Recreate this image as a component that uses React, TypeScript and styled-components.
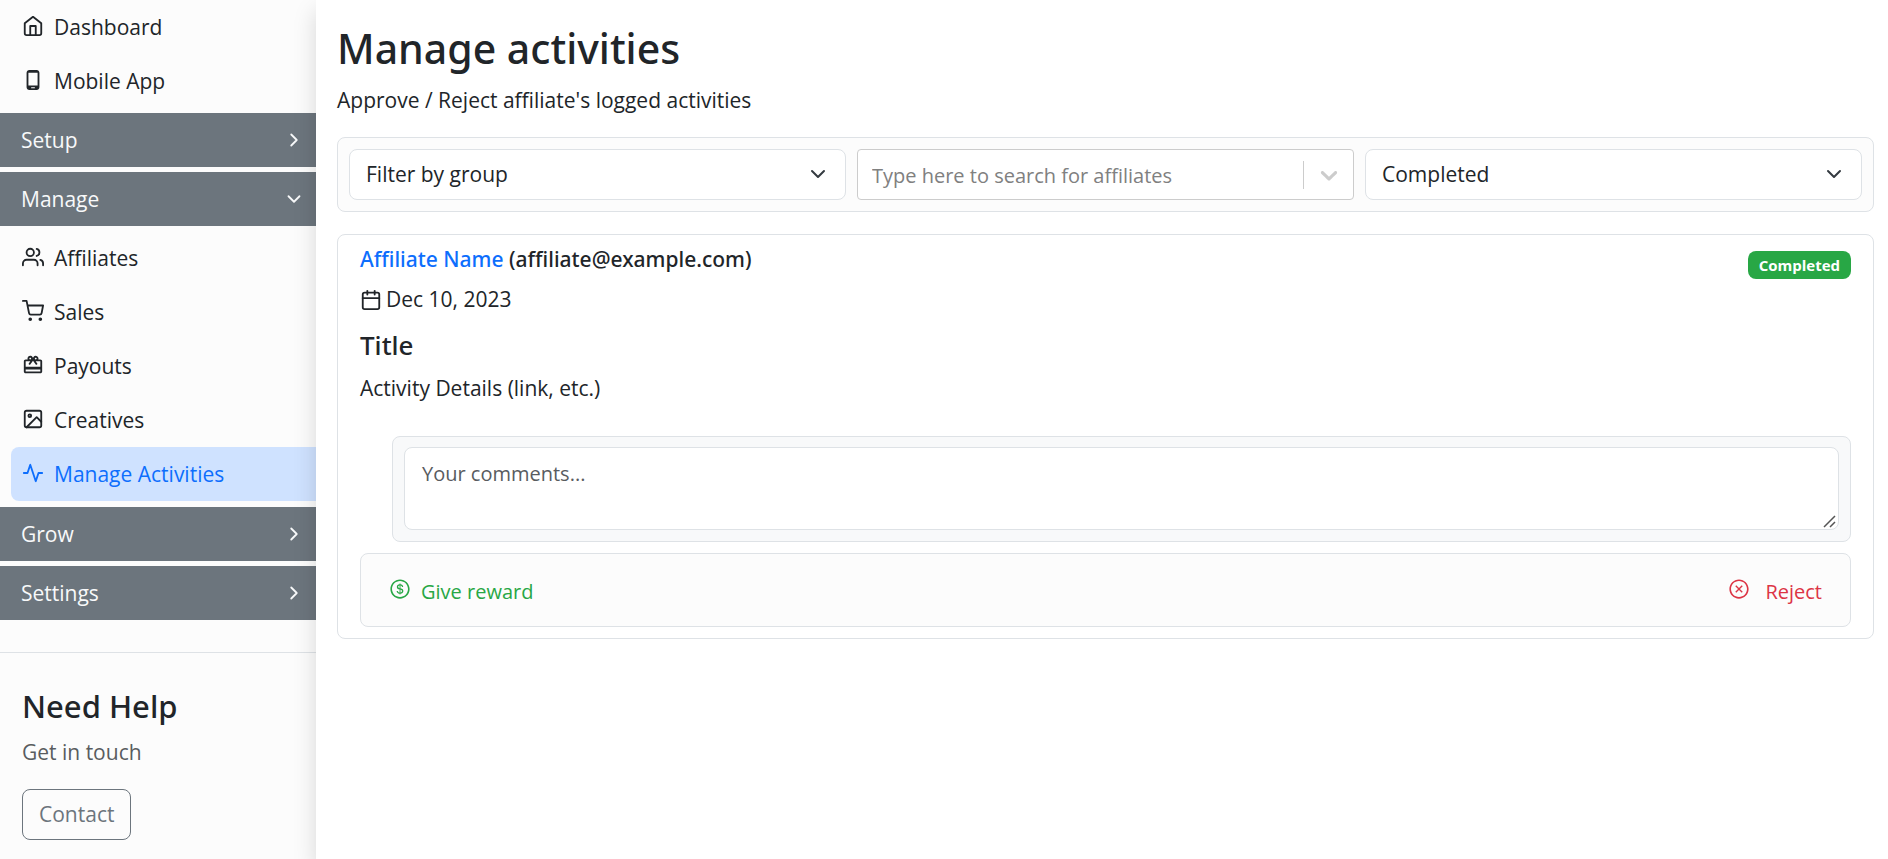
import React from "react";
import styled, { createGlobalStyle } from "styled-components";
import type { IconType } from "react-icons";
import {
  FiActivity,
  FiCalendar,
  FiChevronDown,
  FiChevronRight,
  FiHome,
  FiImage,
  FiShoppingCart,
  FiUsers,
} from "react-icons/fi";
import { MdOutlinePhoneAndroid, MdRedeem } from "react-icons/md";
import { AiOutlineCloseCircle, AiOutlineDollarCircle } from "react-icons/ai";

const bodyFont = '"Segoe UI", "Open Sans", "Noto Sans", sans-serif';
const headingFont = '"Segoe UI", "Noto Sans", sans-serif';

const color = {
  text: "#212529",
  muted: "#595c5f",
  gray: "#6c757d",
  border: "#dee2e6",
  panel: "#fcfcfc",
  blue: "#0d6efd",
  green: "#28a745",
  red: "#dc3545",
};

const GlobalStyle = createGlobalStyle`
  *, *::before, *::after { box-sizing: border-box; }
  body {
    margin: 0;
    background: #fff;
    color: ${color.text};
    font-family: ${bodyFont};
    font-size: 21px;
    line-height: 33px;
  }
  h1, h2, h3, p { margin: 0; }
  a { text-decoration: none; }
  button, input, select, textarea { font: inherit; }
`;

const Page = styled.div`
  display: flex;
  min-height: 100vh;
`;

const Sidebar = styled.aside`
  flex: 0 0 316px;
  background: ${color.panel};
`;

const Nav = styled.nav`
  display: flex;
  flex-direction: column;
  gap: 5px;
  padding-bottom: 32px;
  border-bottom: 1px solid ${color.border};
`;

const NavList = styled.ul`
  list-style: none;
  margin: 0;
  padding: 0 0 0 11px;

  button + & {
    padding-bottom: 1px;
  }
`;

const NavLink = styled.a<{ $active?: boolean }>`
  display: flex;
  align-items: center;
  gap: 10px;
  height: 54px;
  padding-left: 11px;
  border-radius: 8px 0 0 8px;
  color: ${(p) => (p.$active ? color.blue : color.text)};
  background: ${(p) => (p.$active ? "#cfe2ff" : "transparent")};

  svg {
    flex: none;
    margin-bottom: 2px;
  }
`;

const GroupButton = styled.button`
  display: flex;
  align-items: center;
  justify-content: space-between;
  width: 100%;
  height: 54px;
  padding: 0 11px 0 21px;
  border: 0;
  background: ${color.gray};
  color: #f8f9fa;
  text-align: left;
  cursor: pointer;
`;

const Help = styled.section`
  display: flex;
  flex-direction: column;
  align-items: flex-start;
  padding: 35px 22px 19px;
`;

const HelpTitle = styled.h2`
  margin-bottom: 11px;
  font: 500 31px/37px ${headingFont};
`;

const HelpText = styled.p`
  margin-bottom: 20px;
  color: ${color.muted};
`;

const ContactButton = styled.button`
  height: 51px;
  padding: 0 16px;
  border: 1px solid ${color.gray};
  border-radius: 8px;
  background: transparent;
  color: ${color.gray};
  cursor: pointer;
`;

const Main = styled.main`
  position: relative;
  flex: 1;
  min-width: 0;
  padding: 22px 14px 22px 21px;
  background: #fff;
  box-shadow: 0 11px 22px rgba(0, 0, 0, 0.15);
`;

const PageTitle = styled.h1`
  margin-bottom: 10px;
  font: 500 41px/52px ${headingFont};
`;

const Filters = styled.form`
  display: grid;
  grid-template-columns: repeat(3, minmax(0, 1fr));
  gap: 11px;
  margin: 20px 0 22px;
  padding: 11px;
  border: 1px solid ${color.border};
  border-radius: 8px;
  background: ${color.panel};
`;

const SelectField = styled.div`
  position: relative;

  svg {
    position: absolute;
    top: 17px;
    right: 20px;
    pointer-events: none;
  }
`;

const Select = styled.select`
  display: block;
  width: 100%;
  height: 51px;
  padding: 0 50px 0 16px;
  border: 1px solid ${color.border};
  border-radius: 8px;
  background: #fff;
  color: ${color.text};
  appearance: none;
`;

const SearchField = styled.div`
  display: flex;
  align-items: center;
  height: 51px;
  border: 1px solid #ccc;
  border-radius: 4px;
  background: #fff;
`;

const SearchInput = styled.input`
  flex: 1;
  min-width: 0;
  height: 100%;
  padding: 2px 14px 0;
  border: 0;
  outline: 0;
  background: transparent;
  font-size: 20px;

  &::placeholder {
    color: #808080;
    opacity: 1;
  }
`;

const SearchToggle = styled.button`
  display: flex;
  align-items: center;
  justify-content: center;
  width: 50px;
  height: 28px;
  padding: 0;
  border: 0;
  border-left: 1px solid #ccc;
  background: transparent;
  color: #ccc;
`;

const Card = styled.article`
  padding: 8px 22px 11px;
  border: 1px solid ${color.border};
  border-radius: 8px;
`;

const CardHeader = styled.header`
  display: flex;
  justify-content: space-between;
  align-items: flex-start;
`;

const Affiliate = styled.p`
  margin-bottom: 7px;
  font-family: ${headingFont};
  font-weight: 500;

  a {
    color: ${color.blue};
  }
`;

const DateLine = styled.p`
  display: flex;
  align-items: center;
  gap: 4px;
`;

const Badge = styled.span`
  margin-top: 8px;
  padding: 0 11px;
  border-radius: 8px;
  background: ${color.green};
  color: #fff;
  font-size: 15px;
  font-weight: 700;
  line-height: 28px;
`;

const ActivityTitle = styled.h3`
  margin: 13px 0 11px;
  font: 500 26px/32px ${headingFont};
`;

const CommentBox = styled.div`
  position: relative;
  margin: 31px 0 11px 32px;
  padding: 10px 11px 11px;
  border: 1px solid ${color.border};
  border-radius: 8px;
  background: #f8f9fa;
`;

const CommentInput = styled.textarea`
  display: block;
  width: 100%;
  height: 83px;
  padding: 9px 17px;
  border: 1px solid ${color.border};
  border-radius: 8px;
  background: #fff;
  font-size: 20px;
  resize: none;

  &::placeholder {
    color: ${color.muted};
    opacity: 1;
  }
`;

const ResizeGrip = styled.svg`
  position: absolute;
  right: 14px;
  bottom: 13px;
  pointer-events: none;
`;

const Actions = styled.footer`
  display: flex;
  justify-content: space-between;
  padding: 11px;
  border: 1px solid ${color.border};
  border-radius: 8px;
  background: ${color.panel};
`;

const ActionButton = styled.button<{ $color: string; $gap: number }>`
  display: flex;
  align-items: center;
  gap: ${(p) => p.$gap}px;
  height: 50px;
  padding: 2px 17px 0;
  border: 0;
  background: transparent;
  color: ${(p) => p.$color};
  font-size: 20px;
  cursor: pointer;

  svg {
    margin-bottom: 4px;
  }
`;

type Item = { label: string; icon: IconType; active?: boolean };

const topItems: Item[] = [
  { label: "Dashboard", icon: FiHome },
  { label: "Mobile App", icon: MdOutlinePhoneAndroid },
];

const manageItems: Item[] = [
  { label: "Affiliates", icon: FiUsers },
  { label: "Sales", icon: FiShoppingCart },
  { label: "Payouts", icon: MdRedeem },
  { label: "Creatives", icon: FiImage },
  { label: "Manage Activities", icon: FiActivity, active: true },
];

function NavItems({ items }: { items: Item[] }) {
  return (
    <NavList>
      {items.map(({ label, icon: Icon, active }) => (
        <li key={label}>
          <NavLink href="#" $active={active} aria-current={active ? "page" : undefined}>
            <Icon size={22} />
            {label}
          </NavLink>
        </li>
      ))}
    </NavList>
  );
}

function NavGroup({ label, open = false }: { label: string; open?: boolean }) {
  const Chevron = open ? FiChevronDown : FiChevronRight;
  return (
    <GroupButton type="button" aria-expanded={open}>
      {label}
      <Chevron size={22} />
    </GroupButton>
  );
}

function FilterSelect({ label, options }: { label: string; options: string[] }) {
  return (
    <SelectField>
      <Select aria-label={label}>
        {options.map((o) => (
          <option key={o}>{o}</option>
        ))}
      </Select>
      <svg width="16" height="16" viewBox="0 0 16 16" fill="none">
        <path d="m2 5 6 6 6-6" stroke="#343a40" strokeWidth="2" strokeLinecap="round" strokeLinejoin="round" />
      </svg>
    </SelectField>
  );
}

export default function App() {
  return (
    <Page>
      <GlobalStyle />
      <Sidebar>
        <Nav aria-label="Main">
          <NavItems items={topItems} />
          <NavGroup label="Setup" />
          <NavGroup label="Manage" open />
          <NavItems items={manageItems} />
          <NavGroup label="Grow" />
          <NavGroup label="Settings" />
        </Nav>
        <Help>
          <HelpTitle>Need Help</HelpTitle>
          <HelpText>Get in touch</HelpText>
          <ContactButton type="button">Contact</ContactButton>
        </Help>
      </Sidebar>

      <Main>
        <PageTitle>Manage activities</PageTitle>
        <p>Approve / Reject affiliate's logged activities</p>

        <Filters>
          <FilterSelect label="Group" options={["Filter by group"]} />
          <SearchField>
            <SearchInput aria-label="Affiliate" placeholder="Type here to search for affiliates" />
            <SearchToggle type="button" aria-label="Show affiliates">
              <svg width="28" height="28" viewBox="0 0 20 20" fill="currentColor">
                <path d="M4.516 7.548c0.436-0.446 1.043-0.481 1.576 0l3.908 3.747 3.908-3.747c0.533-0.481 1.141-0.446 1.574 0 0.436 0.445 0.408 1.197 0 1.615-0.406 0.418-4.695 4.502-4.695 4.502-0.217 0.223-0.502 0.335-0.787 0.335s-0.57-0.112-0.789-0.335c0 0-4.287-4.084-4.695-4.502s-0.436-1.17 0-1.615z" />
              </svg>
            </SearchToggle>
          </SearchField>
          <FilterSelect label="Status" options={["Completed"]} />
        </Filters>

        <Card>
          <CardHeader>
            <div>
              <Affiliate>
                <a href="#">Affiliate Name</a> (affiliate@example.com)
              </Affiliate>
              <DateLine>
                <FiCalendar size={22} />
                Dec 10, 2023
              </DateLine>
            </div>
            <Badge>Completed</Badge>
          </CardHeader>
          <ActivityTitle>Title</ActivityTitle>
          <p>Activity Details (link, etc.)</p>

          <CommentBox>
            <CommentInput aria-label="Your comments" placeholder="Your comments..." />
            <ResizeGrip width="13" height="13" viewBox="0 0 13 13" fill="none" stroke="#555" strokeWidth="1.5">
              <path d="M1 12 12 1M7 12l5-5" />
            </ResizeGrip>
          </CommentBox>

          <Actions>
            <ActionButton type="button" $color={color.green} $gap={10}>
              <AiOutlineDollarCircle size={22} />
              Give reward
            </ActionButton>
            <ActionButton type="button" $color={color.red} $gap={15}>
              <AiOutlineCloseCircle size={22} />
              Reject
            </ActionButton>
          </Actions>
        </Card>
      </Main>
    </Page>
  );
}
